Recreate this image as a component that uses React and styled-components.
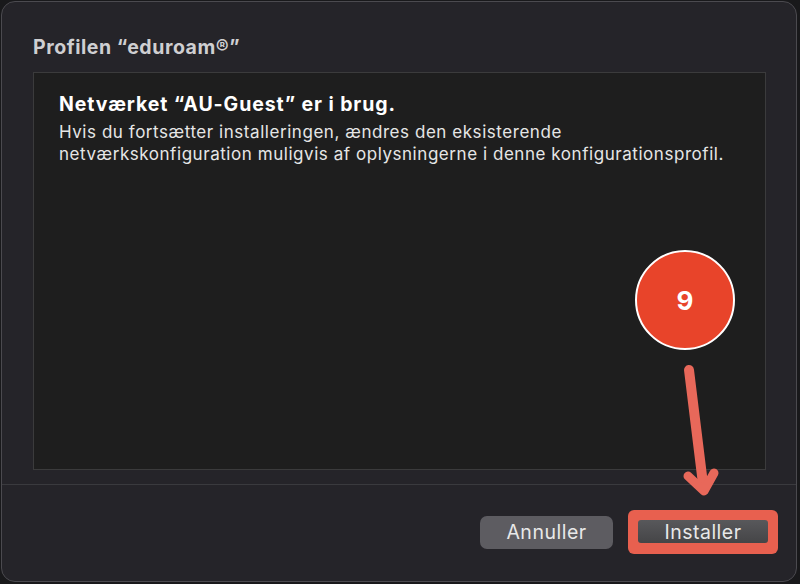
import styled, { createGlobalStyle } from "styled-components";

const Global = createGlobalStyle`
  html, body { margin: 0; padding: 0; background: #19191b; }
  body { font-family: Inter, "Noto Sans", sans-serif; -webkit-font-smoothing: antialiased; }
`;

const Page = styled.div`
  width: 800px;
  height: 584px;
  padding: 1px 3px 2px 1px;
  box-sizing: border-box;
  background: #19191b;
`;

const Window = styled.div`
  position: relative;
  height: 100%;
  box-sizing: border-box;
  background: #252429;
  border: 1px solid #4b4a4f;
  border-radius: 14px;
  display: flex;
  flex-direction: column;
  overflow: hidden;
`;

const Title = styled.h1`
  margin: 33px 0 0 31px;
  font-size: 19.5px;
  font-weight: 700;
  letter-spacing: 0.55px;
  color: #cfcfd1;
  line-height: 24px;
`;

const Content = styled.div`
  margin: 13px 30px 0 31px;
  height: 398px;
  box-sizing: border-box;
  background: #1e1e1e;
  border: 1px solid #3b3b3c;
  padding: 18px 25px;
`;

const Heading = styled.h2`
  margin: 0;
  font-size: 19.5px;
  font-weight: 700;
  letter-spacing: 0.9px;
  color: #ffffff;
  line-height: 26px;
`;

const Body = styled.p`
  margin: 4px 0 0;
  font-size: 17px;
  letter-spacing: 0.55px;
  color: #e6e6e6;
  line-height: 22px;
`;

const Divider = styled.div`
  margin-top: 14px;
  height: 1px;
  background: #3a3a3e;
`;

const Footer = styled.div`
  flex: 1;
  display: flex;
  align-items: center;
  justify-content: flex-end;
  gap: 15px;
  padding: 0 18px 2px 0;
`;

const Button = styled.button`
  height: 33px;
  width: ${(p) => p.$w}px;
  border: none;
  border-radius: 7px;
  background: ${(p) => (p.$primary ? "linear-gradient(#58585b, #454547)" : "#5d5c61")};
  color: #e8e8e8;
  font-family: inherit;
  font-size: 19.5px;
  letter-spacing: 0.5px;
  padding: 0;
  ${(p) => p.$primary && "height: 23px; border-radius: 3px;"}
`;

const Highlight = styled.div`
  padding: 10px 10px 11px 10px;
  background: #e8604f;
  border-radius: 6px;
  display: flex;
`;

const Badge = styled.div`
  position: absolute;
  left: 633px;
  top: 248px;
  width: 96px;
  height: 96px;
  border-radius: 50%;
  background: #e8442a;
  border: 2px solid #ffffff;
  display: flex;
  align-items: center;
  justify-content: center;
  color: #fff;
  font-size: 26px;
  font-weight: 700;
`;

const Arrow = styled.svg`
  position: absolute;
  left: 670px;
  top: 360px;
`;

export default function App() {
  return (
    <>
      <Global />
      <Page>
        <Window>
          <Title>Profilen “eduroam®”</Title>
          <Content>
            <Heading>Netværket “AU-Guest” er i brug.</Heading>
            <Body>
              Hvis du fortsætter installeringen, ændres den eksisterende
              <br />
              netværkskonfiguration muligvis af oplysningerne i denne konfigurationsprofil.
            </Body>
          </Content>
          <Divider />
          <Footer>
            <Button $w={133}>Annuller</Button>
            <Highlight>
              <Button $primary $w={130}>Installer</Button>
            </Highlight>
          </Footer>
          <Badge>9</Badge>
          <Arrow width="60" height="140" viewBox="0 0 60 140">
            <path d="M17 8 L31 122" stroke="#e8685a" strokeWidth="10" strokeLinecap="round" fill="none" />
            <path d="M16 114 L32 129 L42 111" stroke="#e8685a" strokeWidth="9" strokeLinecap="round" strokeLinejoin="round" fill="none" />
          </Arrow>
        </Window>
      </Page>
    </>
  );
}
